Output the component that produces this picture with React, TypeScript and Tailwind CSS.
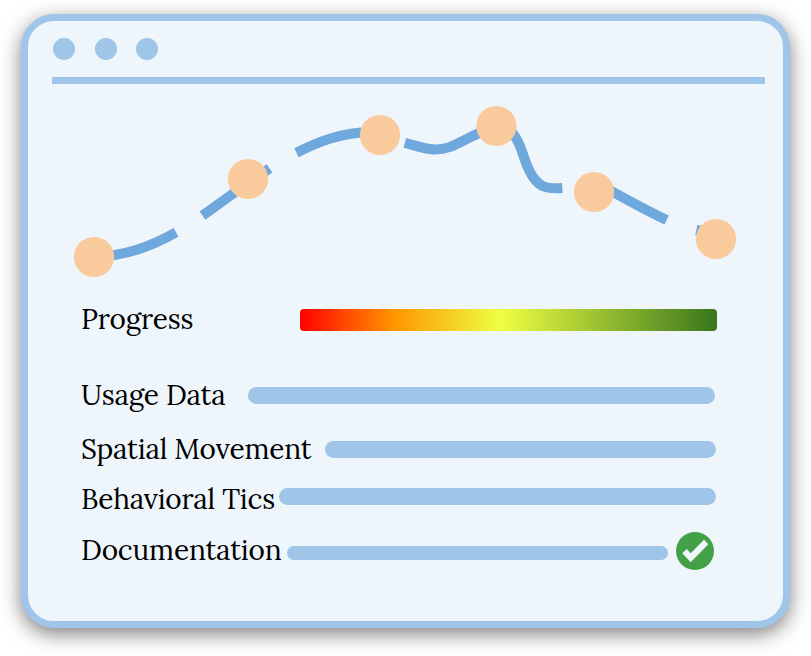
const dashes = [
  'M94 257 C125 256 150 247 176 232.4',
  'M202.5 215.6 L235 192.3 L269.5 168.3',
  'M296.5 152.7 C318 142 340 132.5 372 132',
  'M404.8 142.7 C418 146.5 425 149.4 435 149.4 C454 149.4 459 140 496 126',
  'M505 125 C525 143 521 160 533 177 C540 187 546 189 562.3 188',
  'M604 187 C625 198.5 645 210 666.7 220',
  'M696.3 230 L716 234',
];

const points = [
  [94, 257],
  [248, 179],
  [380, 135],
  [496.4, 126],
  [594, 192],
  [716, 239],
];

function Trend() {
  return (
    <svg className="block h-[200px] w-[755px]" viewBox="28 84 755 200" fill="none">
      {dashes.map((d) => (
        <path key={d} d={d} stroke="#6fa8dc" strokeWidth="10" />
      ))}
      {points.map(([x, y]) => (
        <circle key={x} cx={x} cy={y} r="20.1" fill="#f9cb9c" />
      ))}
    </svg>
  );
}

function Check() {
  return (
    <svg className="ml-2 -mt-[3px] size-[38px] shrink-0" viewBox="0 0 38 38">
      <circle cx="19" cy="19" r="19" fill="#43a047" />
      <path d="M6.3 21.3 10.7 17 14.7 21.2 28 7.7 32.3 12.2 14.7 30.2Z" fill="#eef5fb" />
    </svg>
  );
}

export default function App() {
  return (
    <div className="h-[656px] w-[811px] overflow-hidden bg-white pt-[14px] pl-[21px]">
      <main className="h-[614px] w-[769px] rounded-[33px] border-[7px] border-[#9fc5e8] bg-[#eef5fb] shadow-[0_6px_20px_rgba(0,0,0,0.5)]">
        <header className="flex h-[56px] items-center pl-[25px]">
          <span className="size-[22px] rounded-full bg-[#9fc5e8]" />
          <span className="ml-5 size-[22px] rounded-full bg-[#9fc5e8]" />
          <span className="ml-[19px] size-[22px] rounded-full bg-[#9fc5e8]" />
        </header>
        <div className="ml-[23.5px] h-[7px] w-[713px] bg-[#9fc5e8]" />
        <Trend />
        <section className="mt-5 pl-[53px] font-['Lora','Liberation_Serif',serif] text-[28px] leading-[30px] tracking-[-0.19px] whitespace-nowrap text-black">
          <div className="flex h-[76px] items-start">
            <span className="w-[219px]">Progress</span>
            <span className="mt-[5px] h-[22px] w-[417px] rounded bg-[linear-gradient(90deg,#ff0000_0%,#ff9900_23%,#eeff41_48%,#38761d_100%)]" />
          </div>
          <div className="flex h-[54px] items-start">
            <span className="w-[167px]">Usage Data</span>
            <span className="mt-[7px] h-[17px] w-[467px] rounded-full bg-[#9fc5e8]" />
          </div>
          <div className="flex h-[50px] items-start">
            <span className="w-[244px]">Spatial Movement</span>
            <span className="mt-[7px] h-[17px] w-[391px] rounded-full bg-[#9fc5e8]" />
          </div>
          <div className="flex h-[51px] items-start">
            <span className="w-[198px]">Behavioral Tics</span>
            <span className="mt-[4px] h-[17px] w-[437px] rounded-full bg-[#9fc5e8]" />
          </div>
          <div className="flex h-[38px] items-start">
            <span className="w-[206px]">Documentation</span>
            <span className="mt-[11px] h-[14px] w-[381px] rounded-full bg-[#9fc5e8]" />
            <Check />
          </div>
        </section>
      </main>
    </div>
  );
}
